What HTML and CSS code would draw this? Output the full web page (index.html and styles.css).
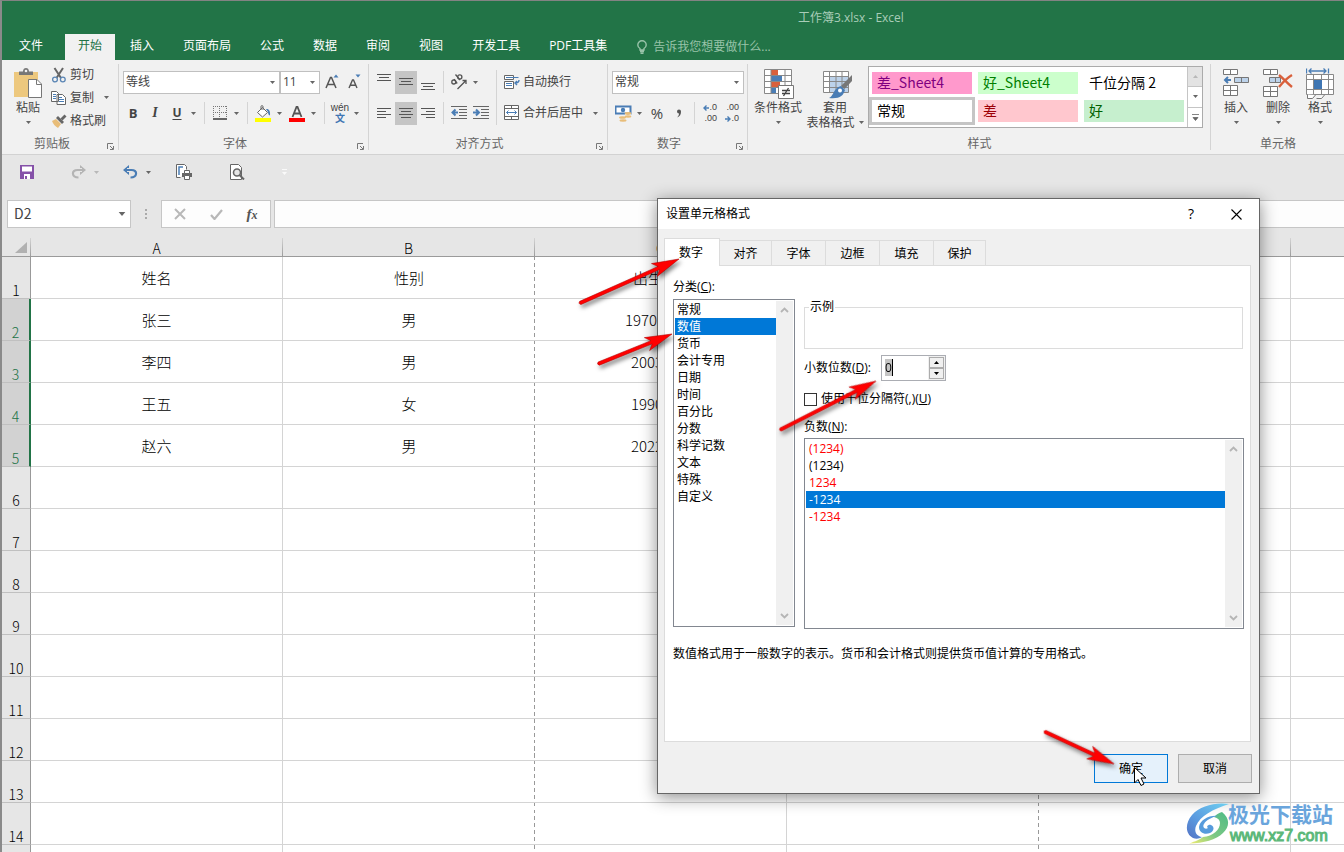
FILE: index.html
```html
<!DOCTYPE html>
<html lang="zh-CN">
<head>
<meta charset="utf-8">
<title>工作簿3.xlsx - Excel</title>
<link rel="stylesheet" href="styles.css">
</head>
<body>
<svg class="defs" aria-hidden="true">
  <symbol id="caret" viewBox="0 0 5 3"><path d="M0 0h5L2.500 3z" fill="currentColor"/></symbol>
  <symbol id="launcher" viewBox="0 0 7 7"><path d="M.5 6V.5H6M3 3l3 3M6.500 3v3.500H3" fill="none" stroke="#777"/></symbol>
  <symbol id="chev-up" viewBox="0 0 9 6"><path d="M1 5l3.500-3.500L8 5" fill="none" stroke="#b5b5b5" stroke-width="1.800"/></symbol>
  <symbol id="chev-down" viewBox="0 0 9 6"><path d="M1 1l3.500 3.500L8 1" fill="none" stroke="#b5b5b5" stroke-width="1.800"/></symbol>
</svg>
<div class="app">
  <header class="titlebar">
    <div class="title">工作簿3.xlsx - Excel</div>
    <nav class="tabs">
      <button class="tab file">文件</button>
      <button class="tab active">开始</button>
      <button class="tab">插入</button>
      <button class="tab">页面布局</button>
      <button class="tab">公式</button>
      <button class="tab">数据</button>
      <button class="tab">审阅</button>
      <button class="tab">视图</button>
      <button class="tab">开发工具</button>
      <button class="tab">PDF工具集</button>
      <button class="tell">
        <svg width="10" height="14" viewBox="0 0 10 14" fill="none" stroke="currentColor" stroke-width="1.400"><path d="M3 10V8.500C1.500 7.500.8 6.300.8 4.900a4.200 4.200 0 0 1 8.400 0C9.200 6.300 8.500 7.500 7 8.500V10zM3 11.500h4M3.500 13.200h3"/></svg>
        <span>告诉我您想要做什么...</span>
      </button>
    </nav>
  </header>

  <section class="ribbon">
    <div class="group clipboard">
      <div class="group-body">
        <button class="big paste">
          <svg width="30" height="31" viewBox="0 0 30 31"><path d="M1 4h24v25H1z" fill="#edc87e"/><path d="M6 7V3.500h4C10 1 11.500 0 13 0s3 1 3 3.500h4V7z" fill="#777"/><circle cx="13" cy="3" r="1.300" fill="#f1f1f1"/><path d="M15.500 11.500h8.500l4.500 4.500v13.500h-13z" fill="#fff" stroke="#777"/><path d="M23.500 11.500V16.500h5" fill="none" stroke="#777"/></svg>
          <span>粘贴</span>
          <svg class="caret"><use href="#caret"/></svg>
        </button>
        <div class="clip-list">
          <button class="small">
            <svg width="16" height="16" viewBox="0 0 16 16" fill="none"><path d="M3.500 1l6.500 10M12 1L5.500 11" stroke="#666" stroke-width="2"/><circle cx="4" cy="12.500" r="2.400" stroke="#5b86b5" stroke-width="1.300"/><circle cx="11.800" cy="12.500" r="2.400" stroke="#5b86b5" stroke-width="1.300"/></svg>
            <span>剪切</span>
          </button>
          <button class="small">
            <svg width="16" height="16" viewBox="0 0 16 16"><path d="M.5 1.500h5l2 2v8h-7zM6 4.500h5.500l3 3v7H6z" fill="#fff" stroke="#666"/><path d="M2 4.500h3M2 6.500h3M2 8.500h3M8 7.500h3M8 9.500h5M8 11.500h5" stroke="#4a7db5"/></svg>
            <span>复制</span>
            <svg class="caret"><use href="#caret"/></svg>
          </button>
          <button class="small">
            <svg width="16" height="16" viewBox="0 0 16 16"><path d="M1 8l4-2 5 5-3 4C4 13 2 11 1 8z" fill="#e8bd79"/><path d="M5 5l2-2 6 6-2 2z" fill="#666"/><path d="M9.500 5.500L13.500 1.500l2 2-4 4z" fill="#666"/></svg>
            <span>格式刷</span>
          </button>
        </div>
      </div>
      <div class="group-foot"><span>剪贴板</span><svg class="launch"><use href="#launcher"/></svg></div>
    </div>

    <div class="group font">
      <div class="group-body rows">
        <div class="row">
          <div class="combo font-name"><select aria-label="字体"><option>等线</option></select><svg class="caret"><use href="#caret"/></svg></div>
          <div class="combo font-size"><select aria-label="字号"><option>11</option></select><svg class="caret"><use href="#caret"/></svg></div>
          <button class="ico" aria-label="增大字号"><svg width="14" height="16" viewBox="0 0 14 16"><path d="M1 14L5.500 3.500h1L11 14M2.800 10.500h6.400" fill="none" stroke="#555" stroke-width="1.500"/><path d="M8.500 3.500L11 .5l2.500 3z" fill="#4a7db5"/></svg></button>
          <button class="ico" aria-label="减小字号"><svg width="14" height="16" viewBox="0 0 14 16"><path d="M2 14l3.500-8h1L10 14M3.500 11.300h5" fill="none" stroke="#555" stroke-width="1.400"/><path d="M8.500 .5h5l-2.500 3z" fill="#4a7db5"/></svg></button>
        </div>
        <div class="row">
          <button class="ico bold">B</button>
          <button class="ico italic">I</button>
          <button class="ico underline">U</button>
          <button class="drop" aria-label="下划线选项"><svg class="caret"><use href="#caret"/></svg></button>
          <i class="sep"></i>
          <button class="ico" aria-label="边框"><svg width="14" height="14" viewBox="0 0 14 14"><path d="M0 .5h14M0 6.500h14M.5 0v12M6.500 0v12M13.500 0v12" stroke="#777" stroke-dasharray="1 1"/><path d="M0 13h14" stroke="#666" stroke-width="2"/></svg></button>
          <button class="drop" aria-label="边框选项"><svg class="caret"><use href="#caret"/></svg></button>
          <i class="sep"></i>
          <button class="ico" aria-label="填充颜色"><svg width="16" height="17" viewBox="0 0 16 17"><path d="M2.500 7.500l5-5 5 5-5 4.500z" fill="#fff" stroke="#666"/><path d="M6 5V1.500C6 .3 8 .3 8 1.500V5" fill="none" stroke="#666"/><path d="M11 4c3-.5 4.500 2 4 6.500-1.500-.5-2-2-2-3.500z" fill="#4a7db5"/><path d="M0 13h16v4H0z" fill="#ff0"/></svg></button>
          <button class="drop" aria-label="填充选项"><svg class="caret"><use href="#caret"/></svg></button>
          <button class="ico gap" aria-label="字体颜色"><svg width="16" height="17" viewBox="0 0 16 17"><path d="M3.500 12L7.500 2h1l4 10M5 8.500h6" fill="none" stroke="#555" stroke-width="1.800"/><path d="M0 13h16v4H0z" fill="#f00"/></svg></button>
          <button class="drop" aria-label="颜色选项"><svg class="caret"><use href="#caret"/></svg></button>
          <i class="sep"></i>
          <button class="ico pinyin"><span>wén</span><span class="wen">文</span></button>
          <button class="drop" aria-label="拼音选项"><svg class="caret"><use href="#caret"/></svg></button>
        </div>
      </div>
      <div class="group-foot"><span>字体</span><svg class="launch"><use href="#launcher"/></svg></div>
    </div>

    <div class="group align">
      <div class="group-body">
        <div class="rows align-pos">
          <div class="row">
            <button class="ico" aria-label="顶端对齐"><svg width="14" height="20" viewBox="0 0 14 20"><path d="M0 2.500h14M2 5.500h10M0 8.500h14" stroke="#555"/></svg></button>
            <button class="ico on" aria-label="垂直居中"><svg width="14" height="20" viewBox="0 0 14 20"><path d="M0 6.500h14M2 9.500h10M0 12.500h14" stroke="#555"/></svg></button>
            <button class="ico" aria-label="底端对齐"><svg width="14" height="20" viewBox="0 0 14 20"><path d="M0 11.500h14M2 14.500h10M0 17.500h14" stroke="#555"/></svg></button>
            <i class="sep"></i>
            <button class="ico" aria-label="方向"><svg width="18" height="18" viewBox="0 0 18 18" fill="none" stroke="#555" stroke-width="1.300"><circle cx="3.800" cy="9" r="2"/><path d="M4 6.200l3.200 4.300M5.500 1.500l4.500 5.500"/><circle cx="9.800" cy="4" r="2.100"/><path d="M7.500 16l8.500-8.500M12.500 7.500H16V11"/></svg></button>
            <button class="drop" aria-label="方向选项"><svg class="caret"><use href="#caret"/></svg></button>
          </div>
          <div class="row">
            <button class="ico" aria-label="左对齐"><svg width="14" height="14" viewBox="0 0 14 14"><path d="M0 2.500h14M0 5.500h9M0 8.500h14M0 11.500h9" stroke="#555"/></svg></button>
            <button class="ico on" aria-label="居中"><svg width="14" height="14" viewBox="0 0 14 14"><path d="M0 2.500h14M2 5.500h10M0 8.500h14M2 11.500h10" stroke="#555"/></svg></button>
            <button class="ico" aria-label="右对齐"><svg width="14" height="14" viewBox="0 0 14 14"><path d="M0 2.500h14M5 5.500h9M0 8.500h14M5 11.500h9" stroke="#555"/></svg></button>
            <i class="sep"></i>
            <button class="ico" aria-label="减少缩进"><svg width="16" height="14" viewBox="0 0 16 14"><path d="M0 .5h16M8 3.500h8M8 6.500h8M8 9.500h8M0 12.500h16" stroke="#666"/><path d="M7 6.500H2M4.500 3.500L1.500 6.500l3 3" fill="none" stroke="#4a7db5" stroke-width="2"/></svg></button>
            <button class="ico" aria-label="增加缩进"><svg width="16" height="14" viewBox="0 0 16 14"><path d="M0 .5h16M8 3.500h8M8 6.500h8M8 9.500h8M0 12.500h16" stroke="#666"/><path d="M0 6.500h5M3 3.500l3 3-3 3" fill="none" stroke="#4a7db5" stroke-width="2"/></svg></button>
          </div>
        </div>
        <i class="sep tall"></i>
        <div class="rows">
          <div class="row">
            <button class="small"><svg width="16" height="16" viewBox="0 0 16 16"><path d="M.5 1.500h9v4h-9zM.5 7.500h9v7h-9z" fill="#fff" stroke="#666"/><path d="M2 3.500h12.500M2 9.500h6M2 11.500h6" stroke="#4a7db5"/><path d="M15 6c0 2-1 3-4 3M13 7l-2 2 2 2" fill="none" stroke="#4a7db5" stroke-width="1.400"/></svg><span>自动换行</span></button>
          </div>
          <div class="row">
            <button class="small"><svg width="16" height="16" viewBox="0 0 16 16"><path d="M.5 .5h14v14H.5zM.5 3.500h14M.5 11.500h14M7.500 .5v3M7.500 11.500v3" fill="#fff" stroke="#666"/><path d="M2.500 7.500h10M4.500 5.500l-2 2 2 2M10.500 5.500l2 2-2 2" fill="none" stroke="#4a7db5"/></svg><span>合并后居中</span></button>
            <button class="drop far" aria-label="合并选项"><svg class="caret"><use href="#caret"/></svg></button>
          </div>
        </div>
      </div>
      <div class="group-foot"><span>对齐方式</span><svg class="launch"><use href="#launcher"/></svg></div>
    </div>

    <div class="group number">
      <div class="group-body rows">
        <div class="row">
          <div class="combo"><select aria-label="数字格式"><option>常规</option></select><svg class="caret"><use href="#caret"/></svg></div>
        </div>
        <div class="row">
          <button class="ico" aria-label="会计数字格式"><svg width="17" height="17" viewBox="0 0 17 17"><path d="M.5 1.500h15v7H.5z" fill="#fff" stroke="#4a7db5" stroke-width="2"/><circle cx="8" cy="5" r="2.200" fill="#4a7db5"/><path d="M10 8h6v6h-6zM4 11h7v5H4z" fill="#f1f1f1"/><ellipse cx="13" cy="8.500" rx="3.300" ry="1.400" fill="#e8bd79"/><ellipse cx="13" cy="11.500" rx="3.300" ry="1.200" fill="#e8bd79"/><ellipse cx="7.500" cy="12.500" rx="3.500" ry="1.300" fill="#e8bd79"/><ellipse cx="8" cy="15.500" rx="3.500" ry="1.200" fill="#e8bd79"/></svg></button>
          <button class="drop" aria-label="货币选项"><svg class="caret"><use href="#caret"/></svg></button>
          <button class="ico percent">%</button>
          <button class="ico" aria-label="千位分隔样式"><svg width="6" height="9" viewBox="0 0 6 9"><path d="M1 2.500a2 2 0 0 1 4 0C5 5.500 4 7.500 1 8.500 2.500 7 3 6 3 4.500A2 2 0 0 1 1 2.500z" fill="#555"/></svg></button>
          <i class="sep"></i>
          <button class="ico dec"><span><svg width="6" height="6" viewBox="0 0 6 6"><path d="M6 3H1M3.500 .5L1 3l2.500 2.500" fill="none" stroke="#4a7db5" stroke-width="1.400"/></svg>.0</span><span>.00</span></button>
          <button class="ico dec"><span>.00</span><span><svg width="6" height="6" viewBox="0 0 6 6"><path d="M0 3h5M2.500 .5L5 3 2.500 5.500" fill="none" stroke="#4a7db5" stroke-width="1.400"/></svg>.0</span></button>
        </div>
      </div>
      <div class="group-foot"><span>数字</span><svg class="launch"><use href="#launcher"/></svg></div>
    </div>

    <div class="group styles">
      <div class="group-body">
        <button class="big cond">
          <svg width="31" height="31" viewBox="0 0 31 31"><path d="M1.500 1.500h27v24h-27z" fill="#fff"/><path d="M8 1h7v6H8z" fill="#d9603b"/><path d="M8 7h11v6H8z" fill="#4a7db5"/><path d="M8 13h9v6H8z" fill="#d9603b"/><path d="M8 19h5v6H8z" fill="#4a7db5"/><path d="M1.500 1.500h27v24h-27zM1.500 7.500h27M1.500 13.500h27M1.500 19.500h27M8 1.500v24M22 1.500v24" fill="none" stroke="#888"/><path d="M15.500 17.500h15v13h-15z" fill="#fff" stroke="#777"/><path d="M19 22.500h8M19 25.500h8M25.500 20l-5 8" stroke="#444" stroke-width="1.300"/></svg>
          <span>条件格式</span>
          <svg class="caret"><use href="#caret"/></svg>
        </button>
        <button class="big tablefmt">
          <svg width="30" height="31" viewBox="0 0 30 31"><path d="M.5 3.500h25v21H.5z" fill="#fff"/><path d="M7 9h18v15H7z" fill="#bcd2ea"/><path d="M.5 3.500h25v21H.5zM.5 8.500h25M.5 13.500h25M.5 19.500h25M6.500 3.500v21M13 3.500v21M19 3.500v21" fill="none" stroke="#888"/><path d="M29 7v6L21.500 21l-3.500-3z" fill="#777"/><path d="M18 18l4 4c-2 6-5 9-16 8 4-2 4-6 7-9 2-2 3-2.500 5-3z" fill="#4a7db5"/><circle cx="17" cy="22.500" r="2" fill="#fff"/></svg>
          <span>套用</span>
          <span class="with-caret">表格格式<svg class="caret"><use href="#caret"/></svg></span>
        </button>
        <div class="gallery">
          <div class="swatches">
            <button class="sw bad4">差_Sheet4</button>
            <button class="sw good4">好_Sheet4</button>
            <button class="sw">千位分隔 2</button>
            <button class="sw current">常规</button>
            <button class="sw bad">差</button>
            <button class="sw good">好</button>
          </div>
          <div class="gallery-nav">
            <button class="dim" aria-label="上一行"><svg class="caret up"><use href="#caret"/></svg></button>
            <button aria-label="下一行"><svg class="caret"><use href="#caret"/></svg></button>
            <button aria-label="其他"><svg width="7" height="7" viewBox="0 0 7 7"><path d="M0 .5h7M1 3.500h5L3.500 6.500z" fill="#666" stroke="#666" stroke-width=".8"/></svg></button>
          </div>
        </div>
      </div>
      <div class="group-foot"><span>样式</span></div>
    </div>

    <div class="group cells">
      <div class="group-body">
        <button class="big cell">
          <svg width="28" height="31" viewBox="0 0 28 31" fill="#fff" stroke="#777"><path d="M1.500 1.500h14v5h-14zM8.500 1.500v5M1.500 17.500h14v10h-14zM8.500 17.500v10M1.500 22.500h14"/><path d="M12.500 9.500h14v5h-14zM19.500 9.500v5" fill="#bcd2ea"/><path d="M9 12H3M6 9l-3 3 3 3" fill="none" stroke="#4a7db5" stroke-width="2"/></svg>
          <span>插入</span>
          <svg class="caret"><use href="#caret"/></svg>
        </button>
        <button class="big cell">
          <svg width="30" height="31" viewBox="0 0 30 31" fill="#fff" stroke="#777"><path d="M.5 1.500h14v5H.5zM7.500 1.500v5M.5 18.500h14v10H.5zM7.500 18.500v10M.5 23.500h14"/><path d="M6.500 9.500h11v5h-11zM12.500 9.500v5" fill="#bcd2ea"/><path d="M16 7c4 3 8 8 13 12M29 7c-5 3-9 7-13 12" fill="none" stroke="#d9603b" stroke-width="2.400"/></svg>
          <span>删除</span>
          <svg class="caret"><use href="#caret"/></svg>
        </button>
        <button class="big cell">
          <svg width="28" height="31" viewBox="0 0 28 31" fill="#fff" stroke="#777"><path d="M.5 6.500h27v20H.5zM.5 11.500h27M.5 21.500h27M7.500 6.500v20M15.500 6.500v20M22.500 6.500v20" stroke="#888"/><path d="M8 12h8v9H8z" fill="#3f76b3" stroke="none"/><path d="M1.500 26.500v4h5l3-3.500M10.500 30.500h5l3-3.500"/><path d="M.5 .5v5M22.500 .5v5M3 3h17M5.500 .5L3 3l2.500 2.500M17.500 .5L20 3l-2.500 2.500" fill="none" stroke="#4a7db5" stroke-width="1.300"/></svg>
          <span>格式</span>
          <svg class="caret"><use href="#caret"/></svg>
        </button>
      </div>
      <div class="group-foot"><span>单元格</span></div>
    </div>
  </section>

  <div class="qat">
    <button class="q" aria-label="保存"><svg width="14" height="14" viewBox="0 0 14 14"><path d="M0 0h14v14H0z" fill="#8551a8"/><path d="M2 1.500h10v5H2zM4 9h6v5H4z" fill="#fff"/><path d="M5 11h2v3H5z" fill="#8551a8"/></svg></button>
    <button class="q split" aria-label="恢复"><svg width="15" height="14" viewBox="0 0 15 14"><path d="M9 0l6 5-6 5V7h2V3H9z" fill="#b4b4b4"/><path d="M12 5H6.500C0 5 .5 12.500 7.500 12.500" fill="none" stroke="#b4b4b4" stroke-width="2.200"/></svg><svg class="caret faint"><use href="#caret"/></svg></button>
    <button class="q split" aria-label="撤消"><svg width="15" height="14" viewBox="0 0 15 14"><path d="M6 0L0 5l6 5V7H4V3h2z" fill="#4a7db5"/><path d="M3 5h5.500c6.500 0 6 7.500-1 7.500" fill="none" stroke="#4a7db5" stroke-width="2.200"/></svg><svg class="caret"><use href="#caret"/></svg></button>
    <button class="q" aria-label="打印"><svg width="17" height="16" viewBox="0 0 17 16"><path d="M4.500 13.500h-4V.5h8l2 2v3" fill="#fff" stroke="#666"/><path d="M3 11V3h4" fill="none" stroke="#4a7db5" stroke-width="1.500"/><path d="M6 9h10v4H6z" fill="#666"/><path d="M8.500 6.500h5v3h-5zM8.500 11.500h5v4h-5z" fill="#fff" stroke="#666"/></svg></button>
    <button class="q" aria-label="打印预览"><svg width="15" height="16" viewBox="0 0 15 16"><path d="M.5 .5h8l3 3v12H.5z" fill="#fff" stroke="#666"/><circle cx="7" cy="8.500" r="3.500" fill="#e6e6e6" stroke="#666" stroke-width="1.600"/><path d="M9.500 11l4.500 4.500" stroke="#666" stroke-width="2"/></svg></button>
    <button class="q" aria-label="自定义"><svg width="5" height="6" viewBox="0 0 5 6"><path d="M0 0h5v1H0zM0 3h5L2.500 6z" fill="#fafafa"/></svg></button>
  </div>

  <div class="formula">
    <div class="namebox"><input type="text" value="D2" aria-label="名称框"><svg class="caret"><use href="#caret"/></svg></div>
    <svg class="dots" width="2" height="12" viewBox="0 0 2 12"><path d="M0 1h2v2H0zM0 5h2v2H0zM0 9h2v2H0z" fill="#aaa"/></svg>
    <div class="fx">
      <button aria-label="取消"><svg width="12" height="12" viewBox="0 0 12 12"><path d="M1 1l10 10M11 1L1 11" stroke="#b8b8b8" stroke-width="2"/></svg></button>
      <button aria-label="输入"><svg width="13" height="11" viewBox="0 0 13 11"><path d="M1 6l3.500 4L12 1" fill="none" stroke="#b8b8b8" stroke-width="2.200"/></svg></button>
      <button class="fxb"><i>f</i><i class="x">x</i></button>
    </div>
    <input class="formula-input" type="text" aria-label="编辑栏">
  </div>

  <div class="sheet">
    <table class="grid">
      <colgroup><col class="c-head"><col class="c"><col class="c"><col class="c"><col class="c"><col class="c"><col></colgroup>
      <thead>
        <tr><th class="corner"><svg width="12" height="12" viewBox="0 0 12 12"><path d="M12 0v11H0z" fill="#b1b1b1"/></svg></th><th>A</th><th>B</th><th>C</th><th></th><th></th><th></th></tr>
      </thead>
      <tbody>
        <tr><th>1</th><td>姓名</td><td class="page">性别</td><td class="part">出生</td><td class="page"></td><td></td><td></td></tr>
        <tr class="sel"><th>2</th><td>张三</td><td class="page">男</td><td class="part">1970/</td><td class="page"></td><td></td><td></td></tr>
        <tr class="sel"><th>3</th><td>李四</td><td class="page">男</td><td class="part">2003</td><td class="page"></td><td></td><td></td></tr>
        <tr class="sel"><th>4</th><td>王五</td><td class="page">女</td><td class="part">1990</td><td class="page"></td><td></td><td></td></tr>
        <tr class="sel"><th>5</th><td>赵六</td><td class="page">男</td><td class="part">2022</td><td class="page"></td><td></td><td></td></tr>
        <tr><th>6</th><td></td><td class="page"></td><td></td><td class="page"></td><td></td><td></td></tr>
        <tr><th>7</th><td></td><td class="page"></td><td></td><td class="page"></td><td></td><td></td></tr>
        <tr><th>8</th><td></td><td class="page"></td><td></td><td class="page"></td><td></td><td></td></tr>
        <tr><th>9</th><td></td><td class="page"></td><td></td><td class="page"></td><td></td><td></td></tr>
        <tr><th>10</th><td></td><td class="page"></td><td></td><td class="page"></td><td></td><td></td></tr>
        <tr><th>11</th><td></td><td class="page"></td><td></td><td class="page"></td><td></td><td></td></tr>
        <tr><th>12</th><td></td><td class="page"></td><td></td><td class="page"></td><td></td><td></td></tr>
        <tr><th>13</th><td></td><td class="page"></td><td></td><td class="page"></td><td></td><td></td></tr>
        <tr><th>14</th><td></td><td class="page"></td><td></td><td class="page"></td><td></td><td></td></tr>
        <tr><th></th><td></td><td class="page"></td><td></td><td class="page"></td><td></td><td></td></tr>
      </tbody>
    </table>
  </div>

  <section class="dialog" role="dialog" aria-labelledby="dlg-title">
    <header class="dlg-head">
      <span id="dlg-title">设置单元格格式</span>
      <button class="help">?</button>
      <button class="close" aria-label="关闭"><svg width="11" height="11" viewBox="0 0 11 11"><path d="M.5 .5l10 10M10.500 .5l-10 10" stroke="#000" stroke-width="1.100"/></svg></button>
    </header>
    <div class="dlg-tabs" role="tablist">
      <button class="active">数字</button>
      <button class="narrow">对齐</button>
      <button>字体</button>
      <button>边框</button>
      <button>填充</button>
      <button class="narrow">保护</button>
    </div>
    <div class="panel">
      <div class="cols">
        <div class="left">
          <div class="lbl" id="cat">分类(<u>C</u>):</div>
          <div class="listbox cats">
            <ul role="listbox" aria-labelledby="cat">
              <li>常规</li><li class="hit">数值</li><li>货币</li><li>会计专用</li><li>日期</li><li>时间</li><li>百分比</li><li>分数</li><li>科学记数</li><li>文本</li><li>特殊</li><li>自定义</li>
            </ul>
            <div class="bar"><svg><use href="#chev-up"/></svg><svg><use href="#chev-down"/></svg></div>
          </div>
        </div>
        <div class="right">
          <fieldset><legend>示例</legend></fieldset>
          <div class="decimals">
            <label for="dec">小数位数(<u>D</u>):</label>
            <div class="spin">
              <span class="field"><input id="dec" type="text" value="0"><i class="mark"></i></span>
              <span class="steps">
                <button aria-label="增加"><svg class="caret up"><use href="#caret"/></svg></button>
                <button aria-label="减少"><svg class="caret"><use href="#caret"/></svg></button>
              </span>
            </div>
          </div>
          <label class="check"><input type="checkbox"><span>使用千位分隔符(,)(<u>U</u>)</span></label>
          <div class="lbl" id="neg">负数(<u>N</u>):</div>
          <div class="listbox negs">
            <ul role="listbox" aria-labelledby="neg">
              <li class="red">(1234)</li><li>(1234)</li><li class="red">1234</li><li class="hit">-1234</li><li class="red">-1234</li>
            </ul>
            <div class="bar"><svg><use href="#chev-up"/></svg><svg><use href="#chev-down"/></svg></div>
          </div>
        </div>
      </div>
      <p class="note">数值格式用于一般数字的表示。货币和会计格式则提供货币值计算的专用格式。</p>
    </div>
    <footer class="dlg-foot">
      <button class="ok">确定</button>
      <button>取消</button>
    </footer>
  </section>

  <div class="watermark">
    <svg width="44" height="42" viewBox="0 0 44 42">
      <defs>
        <linearGradient id="wb" x1="1" y1="0" x2="0" y2="1"><stop offset="0" stop-color="#6fd0f0"/><stop offset=".6" stop-color="#5a9be0"/><stop offset="1" stop-color="#5573c4"/></linearGradient>
        <linearGradient id="wg" x1="1" y1="0" x2="0" y2="1"><stop offset="0" stop-color="#4dbb86"/><stop offset=".55" stop-color="#7cc884"/><stop offset="1" stop-color="#f2ee70"/></linearGradient>
      </defs>
      <path d="M36 9C44 15 44 24 37 30 30 37 18 40 3 40.500 10 38 13 37 17 34 27 33 34 27 34 20 34 17 32 15 28 14 31 11 33 10 36 9z" fill="url(#wg)"/>
      <path d="M43 1C29-1 14 3 6 12-1 20-1 31 7 35 10 36 13 36 16 34 10 33 8 28 10 23 14 13 27 6 43 1z" fill="url(#wb)"/>
      <path d="M32 13C23 12 14 17 13 24 13 30 19 32 24 30 28 28 29 24 25 22 22 21 20 24 22 25 19 27 16 24 18 21 20 17 26 14 32 13z" fill="#569bdc"/>
    </svg>
    <div class="wm-text"><span class="wm-name">极光下载站</span><span class="wm-url">www.xz7.com</span></div>
  </div>

  <svg class="marks" width="100%" height="100%" aria-hidden="true">
    <g fill="#f00" stroke="#b00000" stroke-width=".5" stroke-linejoin="round">
      <path transform="translate(679 259) rotate(-24)" d="M0 0L-27 7-22 1.700-108 1.700Q-110.500 0-108-1.700L-22-1.700-27-7z"/>
      <path transform="translate(672 334) rotate(-22)" d="M0 0L-27 7-22 1.700-79 1.700Q-81.500 0-79-1.700L-22-1.700-27-7z"/>
      <path transform="translate(876 381) rotate(-27)" d="M0 0L-27 7-22 1.700-107 1.700Q-109.500 0-107-1.700L-22-1.700-27-7z"/>
      <path transform="translate(1114 764) rotate(25)" d="M0 0L-27 7-22 1.700-76 1.700Q-78.500 0-76-1.700L-22-1.700-27-7z"/>
    </g>
    <path transform="translate(1134 767)" d="M.5 .5v15.500l3.500-3.500 3 6 3-1.500-3-6h5z" fill="#fff" stroke="#000"/>
  </svg>
</div>
</body>
</html>
```

FILE: styles.css
```css
* { box-sizing: border-box; }

body {
  margin: 0;
  font: 12px/16px "Open Sans", "Noto Sans CJK SC", sans-serif;
  color: #444;
}

button {
  margin: 0;
  padding: 0;
  border: 0;
  background: none;
  font: inherit;
  color: inherit;
  white-space: nowrap;
}

input, select { font: inherit; color: inherit; border-radius: 0; }
svg { display: block; flex: none; }
.defs { position: absolute; width: 0; height: 0; }
.caret { width: 5px; height: 3px; color: #666; }
.caret.up { rotate: 180deg; }

.app {
  position: relative;
  display: flex;
  flex-direction: column;
  height: 100vh;
  overflow: hidden;
  border-top: 1px solid #838383;
  border-left: 2px solid #8a8a8a;
  background: #e6e6e6;
}

/* Title bar and ribbon tabs */
.titlebar { flex: none; background: #227447; color: #fff; }
.title { height: 33px; padding: 9px 0 0 796px; color: #a9cdb8; }
.tabs { display: flex; gap: 1px; height: 26px; }
.tab { padding: 0 14px 2px; }
.tab.file { padding: 0 17px 2px; margin-right: 4px; }
.tab.active { background: #f1f1f1; color: #217346; padding: 0 13px 2px; }
.tell { display: flex; align-items: center; gap: 6px; padding: 0 15px; color: #98c3a9; }

/* Ribbon */
.ribbon {
  flex: none;
  display: flex;
  height: 95px;
  background: #f1f1f1;
  border-bottom: 1px solid #d2d2d2;
}
.group { position: relative; flex: none; display: flex; flex-direction: column; }
.group::after {
  content: "";
  position: absolute;
  right: 0;
  top: 4px;
  bottom: 4px;
  width: 1px;
  background: #d4d4d4;
}
.group-body { display: flex; height: 72px; padding-top: 8px; }
.rows { display: flex; flex-direction: column; gap: 3px; }
.row { display: flex; align-items: center; height: 28px; }
.group-foot { display: flex; height: 22px; padding-top: 2px; align-items: center; justify-content: center; color: #666; }
.launch { position: absolute; right: 5px; bottom: 4px; width: 7px; height: 7px; }

.clipboard { width: 117px; }
.clipboard .group-foot { padding-right: 17px; }
.font { width: 250px; }
.font .group-foot { padding-right: 18px; }
.align { width: 239px; }
.align .group-foot { padding-right: 18px; }
.number { width: 140px; }
.number .group-foot { padding-right: 18px; }
.styles { width: 463px; }
.cells { width: 134px; }

.big { display: flex; flex-direction: column; align-items: center; line-height: 15px; }
.big > svg:first-child { margin-bottom: 1px; }
.big > .caret { margin-top: 6px; }
.paste { width: 30px; margin-left: 11px; }
.clip-list { display: flex; flex-direction: column; margin: -5px 0 0 8px; }
.small { display: flex; align-items: center; gap: 3px; height: 23px; }
.small .caret { margin-left: 7px; }

.ico { display: flex; align-items: center; justify-content: center; width: 22px; height: 23px; }
.ico.on { background: #c5c5c5; }
.ico.gap { margin-left: 1px; }
.drop { display: flex; align-items: center; justify-content: center; width: 11px; height: 23px; }
.sep { flex: none; width: 1px; height: 22px; margin: 0 4px 0 5px; background: #d4d4d4; }
.sep.tall { height: 55px; margin: 2px 7px 0 4px; }

.combo { position: relative; height: 23px; }
.combo select {
  display: block;
  width: 100%;
  height: 100%;
  padding: 0 2px;
  border: 1px solid #c0c0c0;
  background: #fff;
  appearance: none;
}
.combo .caret { position: absolute; right: 5px; top: 10px; }
.font .group-body { padding-left: 3px; }
.font-name { width: 157px; margin-left: 1px; }
.font-size { width: 40px; margin-right: 1px; }
.bold { font-weight: 700; font-size: 13px; }
.italic { font: italic 700 14px "Liberation Serif", serif; }
.underline { font-weight: 700; text-decoration: underline; text-underline-offset: 2px; }
.pinyin { flex-direction: column; font: 10px/11px "Liberation Sans", "Noto Sans CJK SC", sans-serif; }
.wen { color: #3f76b3; font-weight: 700; }

.align-pos { padding-left: 4px; }
.align-pos .row .sep { margin: 0 4px; }
.align .small { gap: 3px; }
.far { margin-left: 7px; }

.number .group-body { padding-left: 4px; }
.number .combo { width: 132px; }
.percent { font-size: 15px; margin-left: 1px; }
.number .sep { margin: 0 4px; }
.dec { flex-direction: column; align-items: flex-end; font: 9px/11px "Liberation Sans", sans-serif; padding-right: 4px; }
.dec span { display: flex; align-items: center; }

.cond { width: 54px; margin-left: 3px; }
.tablefmt { width: 58px; margin-left: 1px; }
.tablefmt > svg:first-child { margin-left: 6px; }
.with-caret { display: flex; align-items: center; gap: 4px; }
.gallery { display: flex; height: 62px; margin: -2px 0 0 4px; border: 1px solid #ababab; background: #fff; }
.swatches { display: grid; grid-template-columns: repeat(3, 106px); grid-auto-rows: 28px; padding: 2px 0 0; }
.sw { height: 22px; margin: 3px; padding: 0 5px 2px; text-align: left; font: 14px/20px "Noto Sans CJK SC", sans-serif; color: #000; }
.bad4 { background: #ff99cc; color: #800080; }
.good4 { background: #ccffcc; color: #008000; }
.bad { background: #ffc7ce; color: #9c0006; }
.good { background: #c6efce; color: #006100; }
.sw.current { height: 28px; margin: 0; padding: 0 5px 2px; border: 3px solid #c5c5c5; }
.gallery-nav { display: flex; flex-direction: column; width: 15px; border-left: 1px solid #c5c5c5; }
.gallery-nav button { flex: 1; display: flex; align-items: center; justify-content: center; }
.gallery-nav button + button { border-top: 1px solid #c5c5c5; }
.dim { background: #e3e3e3; }
.dim .caret { color: #b8b8b8; }

.cells .group-body { padding-left: 4px; }
.cell { width: 42px; }

/* Quick access toolbar */
.qat { flex: none; display: flex; align-items: center; gap: 37px; height: 34px; padding-left: 18px; }
.q { display: flex; align-items: center; gap: 8px; }
.q.split { width: 15px; }
.q.split + .q { margin-left: 0; }
.q.split + .q:not(.split) { margin-left: 1px; }
.qat .caret { margin-right: -13px; }
.q .faint { color: #b8b8b8; }

/* Formula bar */
.formula { flex: none; display: flex; align-items: center; height: 28px; margin: 11px 0 10px; }
.namebox { position: relative; width: 124px; height: 28px; margin-left: 5px; }
.namebox input { width: 100%; height: 28px; padding: 0 6px 2px; border: 1px solid #c6c6c6; background: #fff; font: 14px "Noto Sans CJK SC", sans-serif; }
.namebox .caret { position: absolute; right: 5px; top: 12px; width: 8px; height: 4px; }
.dots { margin: 0 14px; }
.fx { display: flex; width: 110px; height: 28px; border: 1px solid #c6c6c6; background: #fdfdfd; }
.fx button { flex: 1; display: flex; align-items: center; justify-content: center; }
.fxb { font: 700 15px "Liberation Serif", serif; color: #555; }
.fxb .x { font-size: 12px; margin-top: 3px; }
.formula-input { flex: 1; min-width: 0; height: 28px; margin-left: 3px; border: 1px solid #c6c6c6; border-right: 0; background: #fdfdfd; }

/* Worksheet */
.sheet { flex: 1; min-height: 0; overflow: hidden; }
.grid { width: 100%; table-layout: fixed; border-collapse: separate; border-spacing: 0; color: #000; font: 15px/18px "Noto Sans CJK SC", sans-serif; }
.c-head { width: 29px; }
.c { width: 252px; }
.grid th, .grid td { padding: 0; font-weight: 300; text-align: center; }
.grid thead th {
  height: 19px;
  padding-top: 2px;
  font-size: 14px;
  line-height: 16px;
  border-bottom: 1px solid #999;
  border-right: 1px solid;
  border-image: linear-gradient(#d8d8d8, #999) 1;
  border-top: 0;
  border-left: 0;
}
.corner svg { margin-left: 13px; }
.grid tbody th {
  height: 42px;
  vertical-align: bottom;
  font-size: 14px;
  line-height: 16px;
  background: #e6e6e6;
  border-right: 1px solid #999;
  border-bottom: 1px solid #c0c0c0;
}
.grid .sel th { background: #d2d2d2; color: #217346; border-right: 2px solid #217346; }
.grid td { background: #fff; border-right: 1px solid #d4d4d4; border-bottom: 1px solid #d4d4d4; }
.grid td.page {
  border-right: 0;
  background: repeating-linear-gradient(#999 0 4px, #fff 4px 7px) right / 1px 42px no-repeat #fff;
}
.grid td.part { text-align: right; padding-right: 123px; }
.grid tr > :last-child { border-right: 0; }

/* Format cells dialog */
.dialog {
  position: absolute;
  left: 655px;
  top: 197px;
  width: 603px;
  display: flex;
  flex-direction: column;
  border: 1px solid #666;
  background: #f0f0f0;
  color: #000;
  box-shadow: 0 3px 16px rgba(0, 0, 0, .45);
}
.dlg-head { display: flex; align-items: center; height: 30px; padding-left: 8px; background: #fff; }
.dlg-head span { flex: 1; }
.help { width: 20px; font-size: 14px; margin-right: 12px; }
.close { display: flex; align-items: center; justify-content: center; width: 46px; height: 30px; }
.dlg-tabs { display: flex; align-items: flex-end; height: 37px; padding: 0 6px; margin-bottom: -1px; }
.dlg-tabs button { width: 54px; height: 26px; padding-top: 1px; border: 1px solid #dcdcdc; border-left: 0; }
.dlg-tabs .narrow { width: 52px; }
.dlg-tabs .active { position: relative; width: 56px; height: 28px; padding: 0 2px 0 0; border: 1px solid #dcdcdc; border-bottom: 0; background: #fff; }
.panel { margin: 0 8px 0 6px; padding: 11px 6px 78px 8px; border: 1px solid #dcdcdc; background: #fff; }
.cols { display: flex; gap: 9px; }
.left { width: 122px; }
.right { flex: 1; min-width: 0; padding-top: 21px; }
.lbl { height: 18px; line-height: 19px; }
.listbox { display: flex; border: 1px solid #828790; padding: 1px; background: #fff; }
.listbox ul { flex: 1; margin: 0; padding: 0; list-style: none; }
.listbox li { height: 17px; line-height: 17px; padding-left: 2px; }
.listbox.negs li { padding-left: 3px; }
.listbox .hit { background: #0078d7; color: #fff; }
.listbox .red { color: #f00; }
.bar { display: flex; flex-direction: column; justify-content: space-between; align-items: center; width: 17px; padding: 6px 0; background: #f0f0f0; }
.bar svg { width: 9px; height: 6px; }
.cats { height: 328px; margin-top: 4px; }
.negs { height: 191px; margin-top: 3px; }
fieldset { height: 51px; margin: 0 1px 0 0; padding: 0 4px; border: 1px solid #dcdcdc; }
legend { padding: 0 1px; line-height: 18px; }
.decimals { display: flex; align-items: center; gap: 10px; margin-top: 6px; }
.spin { display: flex; width: 65px; height: 26px; border: 1px solid #abadb3; }
.field { position: relative; flex: 1; min-width: 0; }
.field input { position: relative; z-index: 1; width: 100%; height: 22px; padding: 0 3px; border: 0; background: none; }
.mark { position: absolute; left: 3px; top: 3px; width: 8px; height: 17px; background: #c4c4c4; border-right: 1px solid #000; }
.steps { display: flex; flex-direction: column; width: 17px; padding: 1px; background: #f0f0f0; }
.steps button { flex: 1; display: flex; align-items: center; justify-content: center; border: 1px solid #acacac; }
.steps .caret { color: #000; }
.check { display: flex; align-items: center; gap: 4px; height: 18px; margin: 9px 0; }
.check input { appearance: none; flex: none; width: 13px; height: 13px; margin: 0; border: 1px solid #333; background: #fff; }
.note { margin: 16px 0 0; line-height: 18px; }
.dlg-foot { display: flex; justify-content: flex-end; gap: 10px; padding: 12px 7px 10px; }
.dlg-foot button { width: 74px; height: 29px; border: 1px solid #adadad; background: #e1e1e1; }
.dlg-foot .ok { border-color: #0078d7; background: #e5f1fb; }

/* Overlays */
.watermark { position: absolute; right: 11px; bottom: 7px; display: flex; align-items: flex-end; }
.wm-text { display: flex; flex-direction: column; gap: 3px; margin-left: -2px; }
.wm-name { font: 700 21px/22px "Noto Sans CJK SC", sans-serif; color: #6aa5dc; }
.wm-url { padding-left: 2px; font: 16px/18px "Liberation Sans", sans-serif; color: #5cb87a; -webkit-text-stroke: 1px #5cb87a; }
.marks { position: absolute; inset: -1px 0 0 -2px; pointer-events: none; }
.marks g { filter: drop-shadow(2px 3px 2px rgba(0, 0, 0, .5)); }
```
